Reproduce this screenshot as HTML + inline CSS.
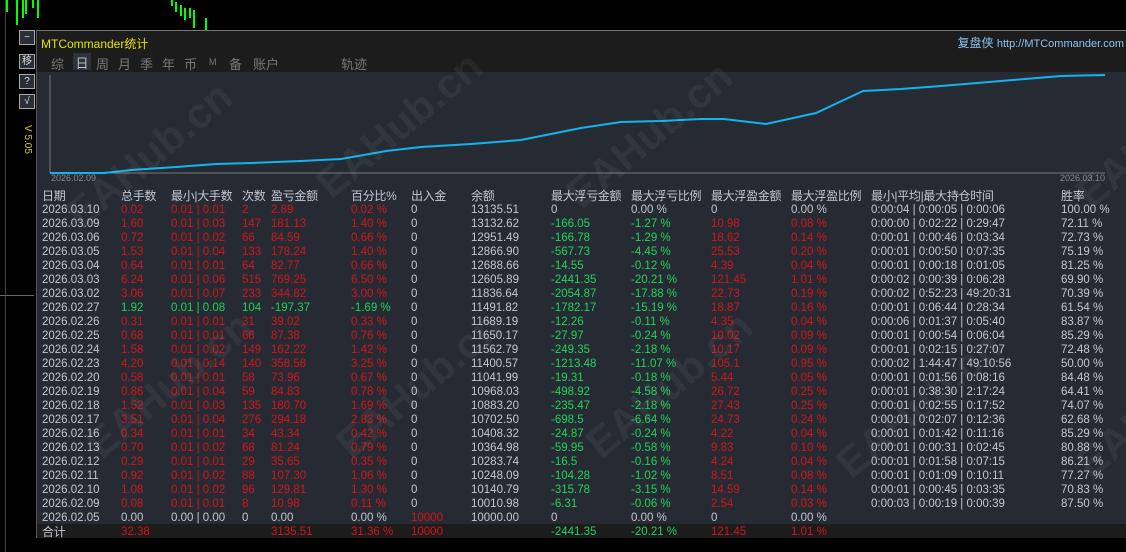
<!DOCTYPE html>
<html><head><meta charset="utf-8"><style>
*{margin:0;padding:0;box-sizing:border-box}
body{width:1126px;height:552px;background:#000;position:relative;overflow:hidden;font-family:"Liberation Sans","Noto Sans CJK SC",sans-serif;font-size:11.5px;color:#c3c7cf}
.a{position:absolute;white-space:nowrap}
#panel{position:absolute;left:36px;top:30px;width:1090px;height:508px;background:#262b33;border-top:1px solid #777;border-left:1px solid #555;border-bottom:2px solid #888}
#title{position:absolute;left:0;top:0;width:100%;height:21px;background:#1c1c1c}
#tabs{position:absolute;left:0;top:21px;width:100%;height:20px;background:#1c1c1c}
.r{position:absolute;left:0;width:100%;height:14px;line-height:14px}
.r span{position:absolute;top:0}
.R{color:#d4141c}.G{color:#1fd35a}
.c0{left:5px}.c1{left:84px}.c2{left:134px}.c3{left:205px}.c4{left:234px}.c5{left:314px}.c6{left:374px}.c7{left:434px}.c8{left:514px}.c9{left:594px}.c10{left:674px}.c11{left:754px}.c12{left:834px}.c13{left:1024px}
.hd{font-size:12px;color:#c3c7cf;letter-spacing:-0.3px}
.btn{position:absolute;left:19px;width:16px;height:15px;border:1px solid #aaa;background:#2a2f37;color:#ddd;font-size:10px;text-align:center;line-height:13px}
.wm{position:absolute;color:rgba(255,255,255,0.05);font-size:42px;font-weight:bold;transform:rotate(-40deg);transform-origin:left top}
</style></head><body>
<svg class="a" style="left:0;top:0" width="240" height="30">
<g stroke="#00ff00" stroke-width="2">
<line x1="7" y1="0" x2="7" y2="12"/><line x1="17" y1="0" x2="17" y2="25"/><line x1="23" y1="0" x2="23" y2="18"/><line x1="26" y1="0" x2="26" y2="14"/><line x1="33" y1="0" x2="33" y2="8"/><line x1="38" y1="0" x2="38" y2="18"/>
<line x1="172" y1="0" x2="172" y2="6"/><line x1="176" y1="2" x2="176" y2="12"/><line x1="181" y1="5" x2="181" y2="16"/><line x1="185" y1="8" x2="185" y2="20"/><line x1="190" y1="8" x2="190" y2="18"/><line x1="194" y1="10" x2="194" y2="28"/><line x1="206" y1="18" x2="206" y2="30"/>
</g></svg>
<div class="a" style="left:5px;top:0;width:1px;height:552px;background:#444"></div>
<div class="a" style="left:0;top:295px;width:34px;height:1px;background:#666"></div>
<div class="btn" style="top:30px">−</div>
<div class="btn" style="top:54px">移</div>
<div class="btn" style="top:74px">?</div>
<div class="btn" style="top:94px">√</div>
<div class="a" style="top:125px;color:#e0d000;font-size:10px;transform:rotate(90deg);transform-origin:left top;left:33px">V 5.05</div>
<div id="panel">
<div id="title"><span class="a" style="left:4px;top:4px;color:#e8e000;font-size:12px">MTCommander统计</span>
<span class="a" style="right:2px;top:3px;color:#8fc4ee;font-size:12px">复盘侠 <span style="font-size:11px">http://MTCommander.com</span></span></div>
<div id="tabs">
<span class="a" style="left:14px;top:2px;color:#777;font-size:13px">综</span>
<span class="a" style="left:36px;top:1px;width:18px;height:17px;background:#2c333d;color:#bbb;font-size:13px;text-align:center">日</span>
<span class="a" style="left:59px;top:2px;color:#777;font-size:13px">周</span>
<span class="a" style="left:81px;top:2px;color:#777;font-size:13px">月</span>
<span class="a" style="left:103px;top:2px;color:#777;font-size:13px">季</span>
<span class="a" style="left:125px;top:2px;color:#777;font-size:13px">年</span>
<span class="a" style="left:147px;top:2px;color:#777;font-size:13px">币</span>
<span class="a" style="left:172px;top:5px;color:#777;font-size:9px">M</span>
<span class="a" style="left:192px;top:2px;color:#777;font-size:13px">备</span>
<span class="a" style="left:216px;top:2px;color:#777;font-size:13px">账户</span>
<span class="a" style="left:304px;top:2px;color:#777;font-size:13px">轨迹</span>
</div>
<svg class="a" style="left:0;top:41px" width="1090" height="110">
<line x1="13" y1="3" x2="13" y2="101" stroke="#777"/>
<line x1="13" y1="101" x2="1068" y2="101" stroke="#777"/>
<polyline fill="none" stroke="#13b3ef" stroke-width="2" points="13,101 67,101 94,98 139,95 179,92 214,91 264,89 304,87 349,79 384,75 434,72 484,68 544,56 584,50 624,49 664,47 687,47 729,52 779,41 826,19 864,17 904,14 964,9 1024,4 1068,3"/>
<text x="14" y="109" fill="#888" font-size="9" font-family="Liberation Sans">2026.02.09</text>
<text x="1023" y="109" fill="#888" font-size="9" font-family="Liberation Sans">2026.03.10</text>
</svg>
<div class="r hd" style="top:158px"><span class="c0">日期</span><span class="c1">总手数</span><span class="c2">最小|大手数</span><span class="c3">次数</span><span class="c4">盈亏金额</span><span class="c5">百分比%</span><span class="c6">出入金</span><span class="c7">余额</span><span class="c8">最大浮亏金额</span><span class="c9">最大浮亏比例</span><span class="c10">最大浮盈金额</span><span class="c11">最大浮盈比例</span><span class="c12">最小|平均|最大持仓时间</span><span class="c13">胜率</span></div>
<div class="r" style="top:172px"><span class="c0">2026.03.10</span><span class="c1 R">0.02</span><span class="c2 R">0.01 | 0.01</span><span class="c3 R">2</span><span class="c4 R">2.89</span><span class="c5 R">0.02 %</span><span class="c6">0</span><span class="c7">13135.51</span><span class="c8">0</span><span class="c9">0.00 %</span><span class="c10">0</span><span class="c11">0.00 %</span><span class="c12">0:00:04 | 0:00:05 | 0:00:06</span><span class="c13">100.00 %</span></div>
<div class="r" style="top:186px"><span class="c0">2026.03.09</span><span class="c1 R">1.60</span><span class="c2 R">0.01 | 0.03</span><span class="c3 R">147</span><span class="c4 R">181.13</span><span class="c5 R">1.40 %</span><span class="c6">0</span><span class="c7">13132.62</span><span class="c8 G">-166.05</span><span class="c9 G">-1.27 %</span><span class="c10 R">10.98</span><span class="c11 R">0.08 %</span><span class="c12">0:00:00 | 0:02:22 | 0:29:47</span><span class="c13">72.11 %</span></div>
<div class="r" style="top:200px"><span class="c0">2026.03.06</span><span class="c1 R">0.72</span><span class="c2 R">0.01 | 0.02</span><span class="c3 R">66</span><span class="c4 R">84.59</span><span class="c5 R">0.66 %</span><span class="c6">0</span><span class="c7">12951.49</span><span class="c8 G">-166.78</span><span class="c9 G">-1.29 %</span><span class="c10 R">18.62</span><span class="c11 R">0.14 %</span><span class="c12">0:00:01 | 0:00:46 | 0:03:34</span><span class="c13">72.73 %</span></div>
<div class="r" style="top:214px"><span class="c0">2026.03.05</span><span class="c1 R">1.53</span><span class="c2 R">0.01 | 0.04</span><span class="c3 R">133</span><span class="c4 R">178.24</span><span class="c5 R">1.40 %</span><span class="c6">0</span><span class="c7">12866.90</span><span class="c8 G">-567.73</span><span class="c9 G">-4.45 %</span><span class="c10 R">25.53</span><span class="c11 R">0.20 %</span><span class="c12">0:00:01 | 0:00:50 | 0:07:35</span><span class="c13">75.19 %</span></div>
<div class="r" style="top:228px"><span class="c0">2026.03.04</span><span class="c1 R">0.64</span><span class="c2 R">0.01 | 0.01</span><span class="c3 R">64</span><span class="c4 R">82.77</span><span class="c5 R">0.66 %</span><span class="c6">0</span><span class="c7">12688.66</span><span class="c8 G">-14.55</span><span class="c9 G">-0.12 %</span><span class="c10 R">4.39</span><span class="c11 R">0.04 %</span><span class="c12">0:00:01 | 0:00:18 | 0:01:05</span><span class="c13">81.25 %</span></div>
<div class="r" style="top:242px"><span class="c0">2026.03.03</span><span class="c1 R">6.24</span><span class="c2 R">0.01 | 0.06</span><span class="c3 R">515</span><span class="c4 R">769.25</span><span class="c5 R">6.50 %</span><span class="c6">0</span><span class="c7">12605.89</span><span class="c8 G">-2441.35</span><span class="c9 G">-20.21 %</span><span class="c10 R">121.45</span><span class="c11 R">1.01 %</span><span class="c12">0:00:02 | 0:00:39 | 0:06:28</span><span class="c13">69.90 %</span></div>
<div class="r" style="top:256px"><span class="c0">2026.03.02</span><span class="c1 R">3.06</span><span class="c2 R">0.01 | 0.07</span><span class="c3 R">233</span><span class="c4 R">344.82</span><span class="c5 R">3.00 %</span><span class="c6">0</span><span class="c7">11836.64</span><span class="c8 G">-2054.87</span><span class="c9 G">-17.88 %</span><span class="c10 R">22.73</span><span class="c11 R">0.19 %</span><span class="c12">0:00:02 | 0:52:23 | 49:20:31</span><span class="c13">70.39 %</span></div>
<div class="r" style="top:270px"><span class="c0">2026.02.27</span><span class="c1 G">1.92</span><span class="c2 G">0.01 | 0.08</span><span class="c3 G">104</span><span class="c4 G">-197.37</span><span class="c5 G">-1.69 %</span><span class="c6">0</span><span class="c7">11491.82</span><span class="c8 G">-1782.17</span><span class="c9 G">-15.19 %</span><span class="c10 R">18.87</span><span class="c11 R">0.16 %</span><span class="c12">0:00:01 | 0:06:44 | 0:28:34</span><span class="c13">61.54 %</span></div>
<div class="r" style="top:284px"><span class="c0">2026.02.26</span><span class="c1 R">0.31</span><span class="c2 R">0.01 | 0.01</span><span class="c3 R">31</span><span class="c4 R">39.02</span><span class="c5 R">0.33 %</span><span class="c6">0</span><span class="c7">11689.19</span><span class="c8 G">-12.26</span><span class="c9 G">-0.11 %</span><span class="c10 R">4.35</span><span class="c11 R">0.04 %</span><span class="c12">0:00:06 | 0:01:37 | 0:05:40</span><span class="c13">83.87 %</span></div>
<div class="r" style="top:298px"><span class="c0">2026.02.25</span><span class="c1 R">0.68</span><span class="c2 R">0.01 | 0.01</span><span class="c3 R">68</span><span class="c4 R">87.38</span><span class="c5 R">0.76 %</span><span class="c6">0</span><span class="c7">11650.17</span><span class="c8 G">-27.97</span><span class="c9 G">-0.24 %</span><span class="c10 R">10.02</span><span class="c11 R">0.09 %</span><span class="c12">0:00:01 | 0:00:54 | 0:06:04</span><span class="c13">85.29 %</span></div>
<div class="r" style="top:312px"><span class="c0">2026.02.24</span><span class="c1 R">1.58</span><span class="c2 R">0.01 | 0.02</span><span class="c3 R">149</span><span class="c4 R">162.22</span><span class="c5 R">1.42 %</span><span class="c6">0</span><span class="c7">11562.79</span><span class="c8 G">-249.35</span><span class="c9 G">-2.18 %</span><span class="c10 R">10.17</span><span class="c11 R">0.09 %</span><span class="c12">0:00:01 | 0:02:15 | 0:27:07</span><span class="c13">72.48 %</span></div>
<div class="r" style="top:326px"><span class="c0">2026.02.23</span><span class="c1 R">4.20</span><span class="c2 R">0.01 | 0.14</span><span class="c3 R">140</span><span class="c4 R">358.58</span><span class="c5 R">3.25 %</span><span class="c6">0</span><span class="c7">11400.57</span><span class="c8 G">-1213.48</span><span class="c9 G">-11.07 %</span><span class="c10 R">105.1</span><span class="c11 R">0.95 %</span><span class="c12">0:00:02 | 1:44:47 | 49:10:56</span><span class="c13">50.00 %</span></div>
<div class="r" style="top:340px"><span class="c0">2026.02.20</span><span class="c1 R">0.58</span><span class="c2 R">0.01 | 0.01</span><span class="c3 R">58</span><span class="c4 R">73.96</span><span class="c5 R">0.67 %</span><span class="c6">0</span><span class="c7">11041.99</span><span class="c8 G">-19.31</span><span class="c9 G">-0.18 %</span><span class="c10 R">5.44</span><span class="c11 R">0.05 %</span><span class="c12">0:00:01 | 0:01:56 | 0:08:16</span><span class="c13">84.48 %</span></div>
<div class="r" style="top:354px"><span class="c0">2026.02.19</span><span class="c1 R">0.86</span><span class="c2 R">0.01 | 0.04</span><span class="c3 R">59</span><span class="c4 R">84.83</span><span class="c5 R">0.78 %</span><span class="c6">0</span><span class="c7">10968.03</span><span class="c8 G">-498.92</span><span class="c9 G">-4.58 %</span><span class="c10 R">26.72</span><span class="c11 R">0.25 %</span><span class="c12">0:00:01 | 0:38:30 | 2:17:24</span><span class="c13">64.41 %</span></div>
<div class="r" style="top:368px"><span class="c0">2026.02.18</span><span class="c1 R">1.52</span><span class="c2 R">0.01 | 0.03</span><span class="c3 R">135</span><span class="c4 R">180.70</span><span class="c5 R">1.69 %</span><span class="c6">0</span><span class="c7">10883.20</span><span class="c8 G">-235.47</span><span class="c9 G">-2.18 %</span><span class="c10 R">27.43</span><span class="c11 R">0.25 %</span><span class="c12">0:00:01 | 0:02:55 | 0:17:52</span><span class="c13">74.07 %</span></div>
<div class="r" style="top:382px"><span class="c0">2026.02.17</span><span class="c1 R">3.51</span><span class="c2 R">0.01 | 0.04</span><span class="c3 R">276</span><span class="c4 R">294.18</span><span class="c5 R">2.83 %</span><span class="c6">0</span><span class="c7">10702.50</span><span class="c8 G">-698.5</span><span class="c9 G">-6.64 %</span><span class="c10 R">24.73</span><span class="c11 R">0.24 %</span><span class="c12">0:00:01 | 0:02:07 | 0:12:36</span><span class="c13">62.68 %</span></div>
<div class="r" style="top:396px"><span class="c0">2026.02.16</span><span class="c1 R">0.34</span><span class="c2 R">0.01 | 0.01</span><span class="c3 R">34</span><span class="c4 R">43.34</span><span class="c5 R">0.42 %</span><span class="c6">0</span><span class="c7">10408.32</span><span class="c8 G">-24.87</span><span class="c9 G">-0.24 %</span><span class="c10 R">4.22</span><span class="c11 R">0.04 %</span><span class="c12">0:00:01 | 0:01:42 | 0:11:16</span><span class="c13">85.29 %</span></div>
<div class="r" style="top:410px"><span class="c0">2026.02.13</span><span class="c1 R">0.70</span><span class="c2 R">0.01 | 0.02</span><span class="c3 R">68</span><span class="c4 R">81.24</span><span class="c5 R">0.79 %</span><span class="c6">0</span><span class="c7">10364.98</span><span class="c8 G">-59.95</span><span class="c9 G">-0.58 %</span><span class="c10 R">9.83</span><span class="c11 R">0.10 %</span><span class="c12">0:00:01 | 0:00:31 | 0:02:45</span><span class="c13">80.88 %</span></div>
<div class="r" style="top:424px"><span class="c0">2026.02.12</span><span class="c1 R">0.29</span><span class="c2 R">0.01 | 0.01</span><span class="c3 R">29</span><span class="c4 R">35.65</span><span class="c5 R">0.35 %</span><span class="c6">0</span><span class="c7">10283.74</span><span class="c8 G">-16.5</span><span class="c9 G">-0.16 %</span><span class="c10 R">4.24</span><span class="c11 R">0.04 %</span><span class="c12">0:00:01 | 0:01:58 | 0:07:15</span><span class="c13">86.21 %</span></div>
<div class="r" style="top:438px"><span class="c0">2026.02.11</span><span class="c1 R">0.92</span><span class="c2 R">0.01 | 0.02</span><span class="c3 R">88</span><span class="c4 R">107.30</span><span class="c5 R">1.06 %</span><span class="c6">0</span><span class="c7">10248.09</span><span class="c8 G">-104.28</span><span class="c9 G">-1.02 %</span><span class="c10 R">8.51</span><span class="c11 R">0.08 %</span><span class="c12">0:00:01 | 0:01:09 | 0:10:11</span><span class="c13">77.27 %</span></div>
<div class="r" style="top:452px"><span class="c0">2026.02.10</span><span class="c1 R">1.08</span><span class="c2 R">0.01 | 0.02</span><span class="c3 R">96</span><span class="c4 R">129.81</span><span class="c5 R">1.30 %</span><span class="c6">0</span><span class="c7">10140.79</span><span class="c8 G">-315.78</span><span class="c9 G">-3.15 %</span><span class="c10 R">14.59</span><span class="c11 R">0.14 %</span><span class="c12">0:00:01 | 0:00:45 | 0:03:35</span><span class="c13">70.83 %</span></div>
<div class="r" style="top:466px"><span class="c0">2026.02.09</span><span class="c1 R">0.08</span><span class="c2 R">0.01 | 0.01</span><span class="c3 R">8</span><span class="c4 R">10.98</span><span class="c5 R">0.11 %</span><span class="c6">0</span><span class="c7">10010.98</span><span class="c8 G">-6.31</span><span class="c9 G">-0.06 %</span><span class="c10 R">2.54</span><span class="c11 R">0.03 %</span><span class="c12">0:00:03 | 0:00:19 | 0:00:39</span><span class="c13">87.50 %</span></div>
<div class="r" style="top:480px"><span class="c0">2026.02.05</span><span class="c1">0.00</span><span class="c2">0.00 | 0.00</span><span class="c3">0</span><span class="c4">0.00</span><span class="c5">0.00 %</span><span class="c6 R">10000</span><span class="c7">10000.00</span><span class="c8">0</span><span class="c9">0.00 %</span><span class="c10">0</span><span class="c11">0.00 %</span></div>
<div class="a" style="left:0;top:493px;width:100%;height:14px;background:#1c1c1c"></div>
<div class="r" style="top:494px"><span class="c0 hd">合计</span><span class="c1 R">32.38</span><span class="c4 R">3135.51</span><span class="c5 R">31.36 %</span><span class="c6 R">10000</span><span class="c8 G">-2441.35</span><span class="c9 G">-20.21 %</span><span class="c10 R">121.45</span><span class="c11 R">1.01 %</span></div>
<div class="wm" style="left:20px;top:170px">EAHub.cn</div>
<div class="wm" style="left:270px;top:140px">EAHub.cn</div>
<div class="wm" style="left:520px;top:150px">EAHub.cn</div>
<div class="wm" style="left:1030px;top:150px">EAHub</div>
<div class="wm" style="left:40px;top:400px">EAHub.cn</div>
<div class="wm" style="left:290px;top:400px">EAHub.cn</div>
<div class="wm" style="left:540px;top:400px">EAHub.cn</div>
<div class="wm" style="left:790px;top:420px">EAHub.cn</div>
<div class="wm" style="left:1030px;top:420px">EAHub</div>
</div>
</body></html>
